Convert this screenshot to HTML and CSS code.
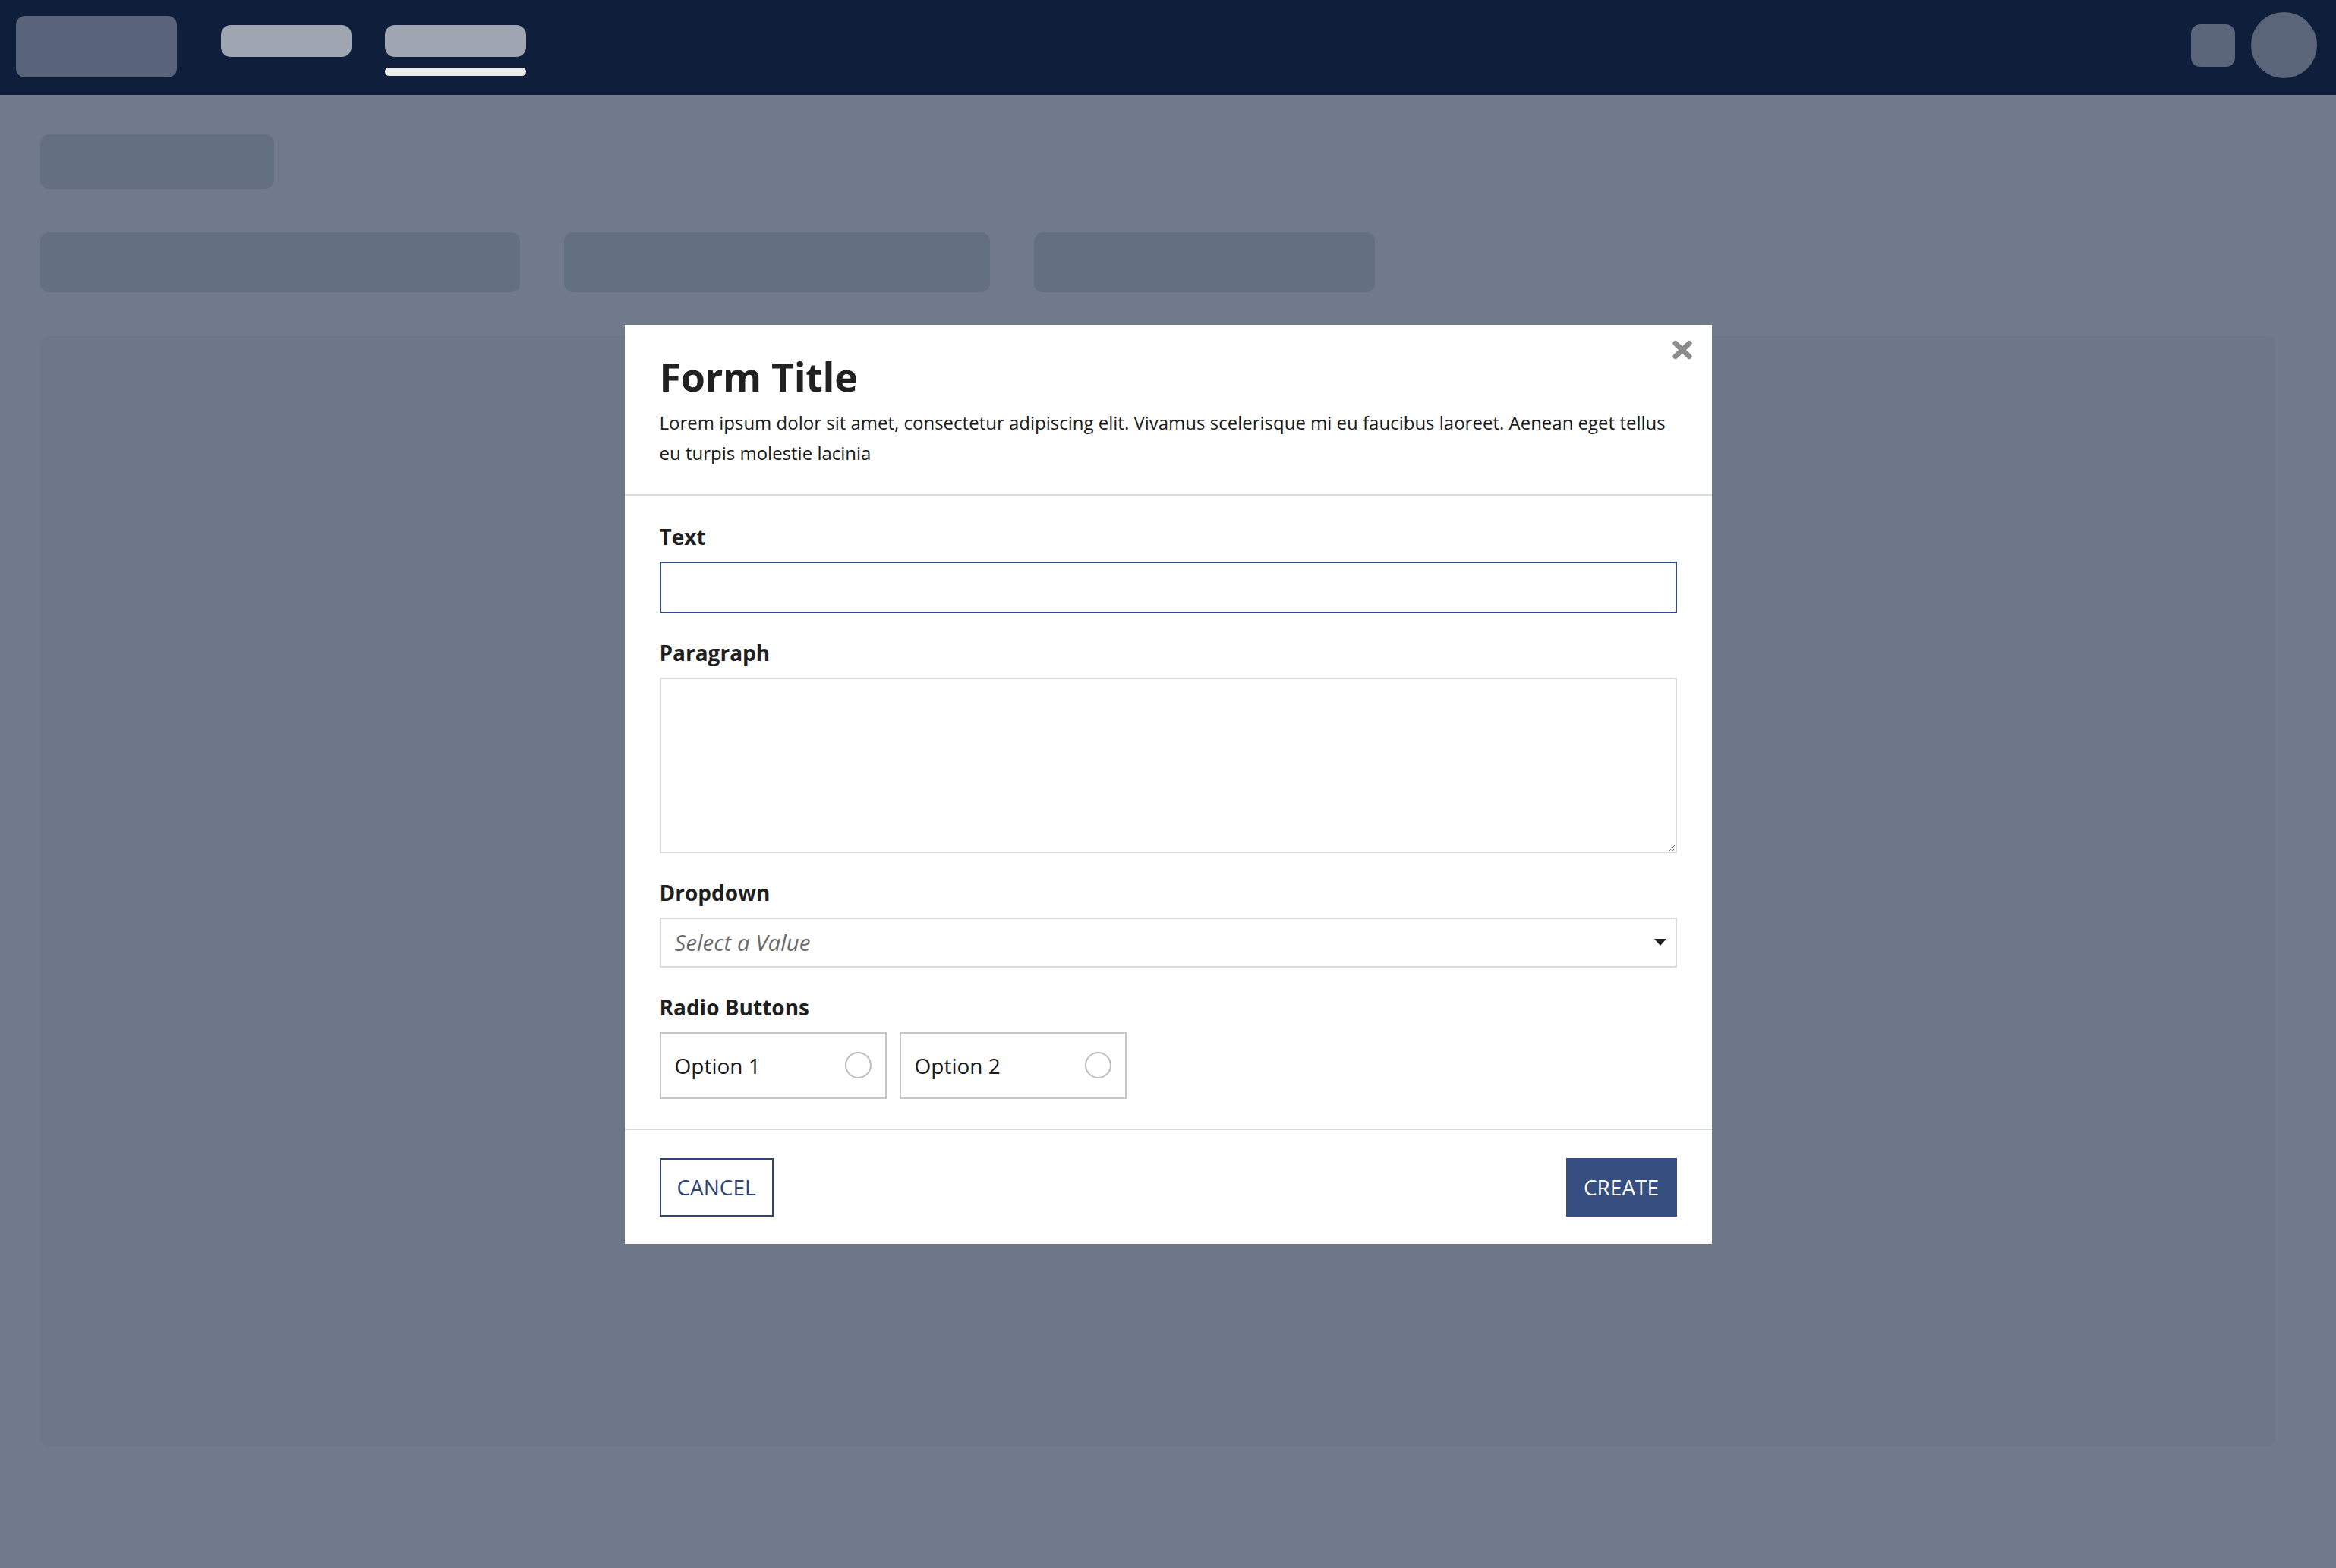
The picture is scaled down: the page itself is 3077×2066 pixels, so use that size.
FILE: index.html
```html
<!DOCTYPE html>
<html lang="en">
<head>
    <meta charset="UTF-8">
    <meta name="viewport" content="width=device-width, initial-scale=1.0">
    <title>Form Title</title>
    <link rel="stylesheet" href="styles.css">
</head>
<body>
    <header class="topbar">
        <div class="topbar-left">
            <div class="logo-block"></div>
            <nav class="nav-links">
                <div class="nav-item nav-item-1">
                    <span class="nav-pill"></span>
                </div>
                <div class="nav-item nav-item-2 active">
                    <span class="nav-pill"></span>
                    <span class="nav-underline"></span>
                </div>
            </nav>
        </div>
        <div class="topbar-right">
            <div class="icon-block"></div>
            <div class="avatar"></div>
        </div>
    </header>

    <main class="page">
        <div class="sk-title"></div>
        <div class="sk-cards">
            <div class="sk-card card-1"></div>
            <div class="sk-card card-2"></div>
            <div class="sk-card card-3"></div>
        </div>
        <div class="sk-panel"></div>
    </main>

    <div class="overlay">
        <div class="modal">
            <button class="close-button" aria-label="Close">
                <svg class="close-icon" viewBox="0 0 28 26">
                    <path d="M5 4.5 L23 21.5 M23 4.5 L5 21.5"/>
                </svg>
            </button>

            <div class="modal-header">
                <h1 class="modal-title">Form Title</h1>
                <p class="modal-desc">Lorem ipsum dolor sit amet, consectetur adipiscing elit. Vivamus scelerisque mi eu faucibus laoreet. Aenean eget tellus eu turpis molestie lacinia</p>
            </div>

            <div class="modal-body">
                <div class="field">
                    <label class="field-label" for="textField">Text</label>
                    <input class="text-input" id="textField" type="text">
                </div>

                <div class="field">
                    <label class="field-label" for="paragraphField">Paragraph</label>
                    <textarea class="textarea" id="paragraphField"></textarea>
                </div>

                <div class="field">
                    <label class="field-label">Dropdown</label>
                    <div class="dropdown">
                        <span class="placeholder">Select a Value</span>
                        <svg class="caret" viewBox="0 0 16 9">
                            <path d="M0 0 H16 L8 9 Z"/>
                        </svg>
                    </div>
                </div>

                <div class="field">
                    <label class="field-label">Radio Buttons</label>
                    <div class="radio-group">
                        <label class="radio-option">
                            <span>Option 1</span>
                            <input type="radio" name="option" class="radio">
                        </label>
                        <label class="radio-option">
                            <span>Option 2</span>
                            <input type="radio" name="option" class="radio">
                        </label>
                    </div>
                </div>
            </div>

            <div class="modal-footer">
                <button class="btn btn-cancel">Cancel</button>
                <button class="btn btn-create">Create</button>
            </div>
        </div>
    </div>
</body>
</html>
```

FILE: styles.css
```css
:root {
    --nav-color: #0f1f3b;
    --page-color: #707a8a;
    --skeleton-color: #646f80;
    --panel-color: #6d7787;
    --primary-color: #364e80;
    --text-color: #1e1e1e;
    --border-color: #dadada;
}

* {
    margin: 0;
    padding: 0;
    box-sizing: border-box;
    font-family: 'Open Sans', 'Liberation Sans', sans-serif;
}

body {
    background-color: var(--page-color);
    height: 100vh;
    overflow: hidden;
}

/* top bar */

.topbar {
    height: 125px;
    background-color: var(--nav-color);
    display: flex;
    justify-content: space-between;
    align-items: flex-start;
    padding: 0 25px 0 21px;
}

.topbar-left {
    display: flex;
    align-items: flex-start;
}

.logo-block {
    width: 212px;
    height: 81px;
    margin-top: 21px;
    border-radius: 12px;
    background-color: #59647a;
}

.nav-links {
    display: flex;
    gap: 44px;
    margin-left: 58px;
    margin-top: 33px;
}

.nav-item {
    display: flex;
    flex-direction: column;
    gap: 14px;
}

.nav-pill {
    display: block;
    height: 42px;
    border-radius: 13px;
    background-color: #a0a6b1;
}

.nav-item-1 {
    width: 172px;
}

.nav-item-2 {
    width: 186px;
}

.nav-underline {
    display: block;
    height: 11px;
    border-radius: 6px;
    background-color: #e9eaec;
}

.topbar-right {
    display: flex;
    align-items: center;
    gap: 21px;
    margin-top: 16px;
}

.icon-block {
    width: 58px;
    height: 56px;
    border-radius: 12px;
    background-color: #5a6579;
}

.avatar {
    width: 87px;
    height: 87px;
    border-radius: 50%;
    background-color: #5a6579;
}

/* page skeleton */

.page {
    padding: 52px 80px 0 53px;
}

.sk-title {
    width: 308px;
    height: 72px;
    border-radius: 12px;
    background-color: var(--skeleton-color);
    margin-bottom: 57px;
}

.sk-cards {
    display: flex;
    gap: 58px;
    margin-bottom: 58px;
}

.sk-card {
    height: 79px;
    border-radius: 12px;
    background-color: var(--skeleton-color);
}

.card-1 { width: 632px; }
.card-2 { width: 561px; }
.card-3 { width: 449px; }

.sk-panel {
    height: 1463px;
    border-radius: 12px;
    background-color: var(--panel-color);
}

/* modal */

.overlay {
    position: fixed;
    inset: 0;
    display: flex;
    justify-content: center;
    align-items: center;
}

.modal {
    position: relative;
    width: 1432px;
    background-color: #ffffff;
    color: var(--text-color);
}

.close-button {
    position: absolute;
    top: 20px;
    right: 25px;
    width: 28px;
    height: 26px;
    border: none;
    background: none;
    cursor: pointer;
}

.close-icon {
    display: block;
    width: 28px;
    height: 26px;
    stroke: #8c8c8c;
    stroke-width: 7;
    stroke-linecap: round;
    fill: none;
}

.modal-header {
    padding: 34px 46px;
    border-bottom: 2px solid var(--border-color);
}

.modal-title {
    font-size: 52px;
    line-height: 67px;
    font-weight: 700;
    letter-spacing: -0.3px;
    color: #212121;
    margin-bottom: 8px;
}

.modal-desc {
    font-size: 24px;
    line-height: 40px;
    color: #1a1a1a;
}

.modal-body {
    display: flex;
    flex-direction: column;
    gap: 32px;
    padding: 34px 46px 39px;
}

.field {
    display: flex;
    flex-direction: column;
}

.field-label {
    font-size: 28px;
    line-height: 40px;
    font-weight: 700;
    color: #1f1f1f;
    margin-bottom: 13px;
}

.text-input {
    height: 68px;
    width: 100%;
    border: 2px solid #2f4a86;
    padding: 0 18px;
    font-size: 28px;
    outline: none;
}

.textarea {
    height: 231px;
    width: 100%;
    border: 2px solid var(--border-color);
    padding: 12px 18px;
    font-size: 28px;
    resize: vertical;
    outline: none;
}

.dropdown {
    height: 66px;
    border: 2px solid var(--border-color);
    padding: 0 12px 0 18px;
    display: flex;
    justify-content: space-between;
    align-items: center;
    cursor: pointer;
}

.placeholder {
    font-size: 29.5px;
    font-style: italic;
    color: #6c6c6c;
}

.caret {
    width: 16px;
    height: 9px;
    fill: #222222;
}

.radio-group {
    display: flex;
    gap: 17px;
}

.radio-option {
    width: 299px;
    height: 88px;
    border: 2px solid #c6c6c6;
    padding: 0 18px;
    display: flex;
    justify-content: space-between;
    align-items: center;
    font-size: 28px;
    color: #1a1a1a;
    cursor: pointer;
}

.radio {
    appearance: none;
    width: 35px;
    height: 35px;
    border: 2px solid #bdbdbd;
    border-radius: 50%;
    cursor: pointer;
}

.modal-footer {
    display: flex;
    justify-content: space-between;
    padding: 37px 46px 36px;
    border-top: 2px solid var(--border-color);
}

.btn {
    height: 77px;
    font-size: 28px;
    text-transform: uppercase;
    cursor: pointer;
}

.btn-cancel {
    width: 150px;
    border: 2px solid #2e4677;
    background-color: #ffffff;
    color: #2e4677;
}

.btn-create {
    width: 146px;
    border: none;
    background-color: var(--primary-color);
    color: #ffffff;
}
```
